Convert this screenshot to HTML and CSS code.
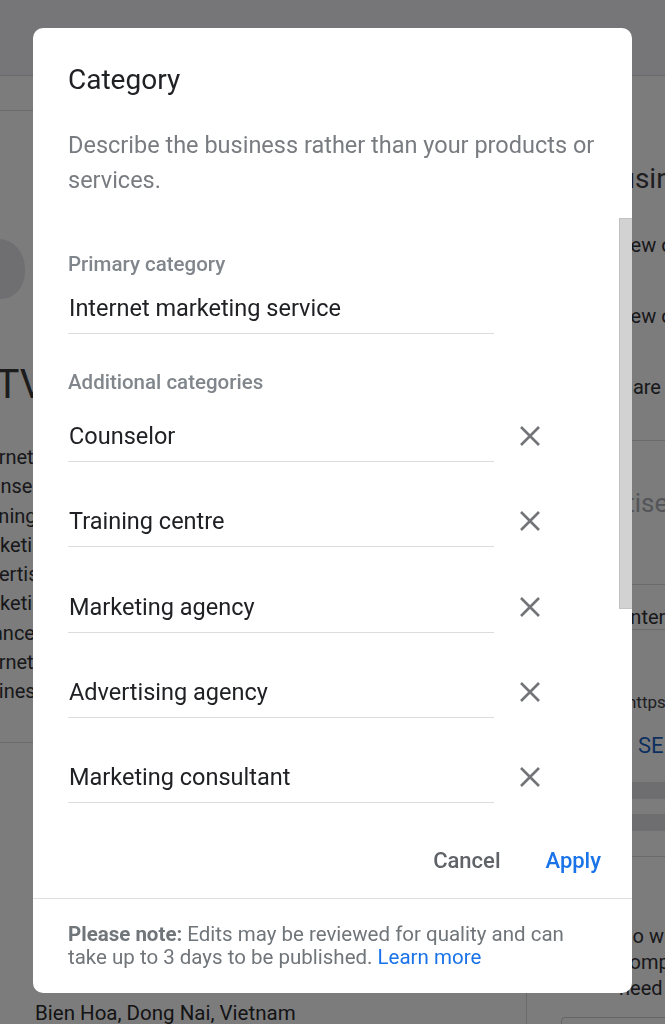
FILE: index.html
```html
<!DOCTYPE html>
<html lang="en">
<head>
    <meta charset="UTF-8">
    <meta name="viewport" content="width=device-width, initial-scale=1.0">
    <title>Category</title>
    <link rel="stylesheet" href="styles.css">
</head>
<body>
<div class="topbar"></div>
<div class="page">
    <div class="left">
        <div class="tabs"></div>
        <div class="logo"></div>
        <div class="biz-name">ATVN</div>
        <ul class="cat-list">
            <li>Internet marketing service</li>
            <li>Counselor</li>
            <li>Training centre</li>
            <li>Marketing agency</li>
            <li>Advertising agency</li>
            <li>Marketing consultant</li>
            <li>Finance broker</li>
            <li>Internet service</li>
            <li>Business centre</li>
        </ul>
        <div class="addr">
            <div class="addr-label">Service area</div>
            <div class="addr-text">Bien Hoa, Dong Nai, Vietnam</div>
        </div>
    </div>
    <div class="right">
        <div class="rc-indent">
            <div class="rc-title">Business Profile</div>
            <div class="rc-link first">View on Maps</div>
            <div class="rc-link">View on Search</div>
            <div class="rc-link">Share profile</div>
        </div>
        <div class="rc-indent rc-section">
            <div class="rc-ad">Advertise</div>
        </div>
        <div class="rc-indent rc-section">
            <div class="rc-small">Enter your website</div>
        </div>
        <div class="rc-indent">
            <div class="rc-url">https://</div>
            <div class="rc-see">SEE DETAILS</div>
        </div>
        <div class="rc-bar"></div>
        <div class="rc-bar"></div>
        <div class="rc-indent rc-tips">
            Go where customers are looking, computers and phones, when you need them
        </div>
        <div class="rc-button"></div>
    </div>
</div>

<div class="backdrop"></div>

<div class="dialog">
    <div class="dialog-title">Category</div>
    <div class="dialog-desc">Describe the business rather than your products or services.</div>

    <div class="scroll-wrap">
        <div class="dialog-scroll">
            <div class="scroll-inner">
                <div class="field-label">Primary category</div>
                <div class="field primary">Internet marketing service</div>

                <div class="field-label extra">Additional categories</div>
                <div class="row first">
                    <div class="field">Counselor</div>
                    <button class="remove" type="button"><svg width="22" height="22" viewBox="0 0 22 22"><path d="M2 2L20 20M20 2L2 20" stroke="#727478" stroke-width="2.6" fill="none"/></svg></button>
                </div>
                <div class="row">
                    <div class="field">Training centre</div>
                    <button class="remove" type="button"><svg width="22" height="22" viewBox="0 0 22 22"><path d="M2 2L20 20M20 2L2 20" stroke="#727478" stroke-width="2.6" fill="none"/></svg></button>
                </div>
                <div class="row">
                    <div class="field">Marketing agency</div>
                    <button class="remove" type="button"><svg width="22" height="22" viewBox="0 0 22 22"><path d="M2 2L20 20M20 2L2 20" stroke="#727478" stroke-width="2.6" fill="none"/></svg></button>
                </div>
                <div class="row">
                    <div class="field">Advertising agency</div>
                    <button class="remove" type="button"><svg width="22" height="22" viewBox="0 0 22 22"><path d="M2 2L20 20M20 2L2 20" stroke="#727478" stroke-width="2.6" fill="none"/></svg></button>
                </div>
                <div class="row">
                    <div class="field">Marketing consultant</div>
                    <button class="remove" type="button"><svg width="22" height="22" viewBox="0 0 22 22"><path d="M2 2L20 20M20 2L2 20" stroke="#727478" stroke-width="2.6" fill="none"/></svg></button>
                </div>
                <div class="row">
                    <div class="field empty">Add another category</div>
                </div>
            </div>
        </div>
        <div class="scroll-thumb"></div>
    </div>

    <div class="dialog-actions">
        <button class="btn cancel" type="button">Cancel</button>
        <button class="btn apply" type="button">Apply</button>
    </div>

    <div class="dialog-note">
        <b>Please note:</b> Edits may be reviewed for quality and can take up to 3 days to be published. <a href="#">Learn more</a>
    </div>
</div>
</body>
</html>
```

FILE: styles.css
```css
body {
    margin: 0;
    font-family: Roboto, "Liberation Sans", sans-serif;
    background-color: #f8f8fa;
    color: #202124;
    width: 665px;
    height: 1024px;
    overflow: hidden;
}

/* page behind the dialog */
.topbar {
    height: 75px;
    background-color: #ececf0;
    border-bottom: 1px solid #d4d4d8;
}
.page {
    display: flex;
    height: 948px;
    overflow: hidden;
}
.left {
    width: 561px;
    margin-left: -35px;
    border-right: 1px solid #d4d4d8;
    flex-shrink: 0;
}
.tabs {
    height: 34px;
    border-bottom: 1px solid #d4d4d8;
}
.logo {
    width: 52px;
    height: 60px;
    margin: 128px 0 0 8px;
    border-radius: 45% 50% 45% 50%;
    background-color: #dedee2;
}
.biz-name {
    margin: 66px 0 0 7px;
    font-size: 40px;
    line-height: 40px;
    color: #38383a;
}
.cat-list {
    list-style: none;
    margin: 38px 0 0;
    padding: 0 0 36px;
    font-size: 20px;
    line-height: 29.25px;
    color: #303034;
    border-bottom: 1px solid #d4d4d8;
}
.addr {
    padding: 229px 0 0 70px;
}
.addr-label {
    margin-bottom: 6px;
    font-size: 18px;
    line-height: 22px;
    font-weight: 500;
}
.addr-text {
    font-size: 20.5px;
    line-height: 26px;
    color: #28282a;
}
.right {
    flex: 1;
    padding-left: 34px;
    white-space: nowrap;
}
.rc-indent {
    padding-left: 58px;
}
.rc-section {
    border-top: 1px solid #d4d4d8;
}
.rc-title {
    margin: 86px 0 0 -17px;
    font-size: 28px;
    line-height: 34px;
    color: #3c3c40;
}
.rc-link {
    margin: 47px 0 0 -6px;
    font-size: 20px;
    line-height: 24px;
    color: #303034;
}
.rc-link.first {
    margin-top: 37px;
}
.rc-link:last-child {
    margin-bottom: 41px;
    margin-left: -9px;
}
.rc-ad {
    margin: 47px 0 66px -60px;
    font-size: 26px;
    line-height: 30px;
    color: #a8abb0;
}
.rc-small {
    margin: 20px 0 16px;
    font-size: 20px;
    line-height: 24px;
    color: #303034;
    border-bottom: 1px solid #d4d4d8;
}
.rc-url {
    margin-top: 61px;
    padding-left: 8px;
    font-size: 17px;
    line-height: 22px;
    color: #404044;
}
.rc-see {
    margin-top: 20px;
    padding-left: 19px;
    font-size: 22px;
    line-height: 26px;
    color: #1a5fc0;
}
.rc-bar {
    height: 17px;
    margin-top: 23px;
    background-color: #dcdce0;
}
.rc-bar + .rc-bar {
    margin-top: 15px;
    border-bottom: 25px solid #f8f8fa;
}
.rc-tips {
    border-top: 1px solid #d4d4d8;
    padding-top: 66px;
    white-space: normal;
    width: 300px;
    font-size: 20px;
    line-height: 26px;
    color: #303034;
}
.rc-button {
    margin-top: 16px;
    height: 40px;
    border: 1px solid #c8c8cc;
    border-radius: 4px;
}

.backdrop {
    position: fixed;
    top: 0;
    left: 0;
    right: 0;
    bottom: 0;
    background-color: rgba(0, 0, 0, 0.5);
}

/* dialog */
.dialog {
    position: fixed;
    top: 28px;
    left: 33px;
    width: 599px;
    background-color: #fff;
    border-radius: 10px;
    overflow: hidden;
}
.dialog-title {
    padding: 36px 35px 0;
    font-size: 28px;
    line-height: 32px;
    color: #202124;
}
.dialog-desc {
    padding: 31.5px 20px 20.5px 35px;
    font-size: 23.5px;
    line-height: 35px;
    color: #787c81;
}
.scroll-wrap {
    position: relative;
}
.dialog-scroll {
    height: 612px;
    overflow-y: auto;
    scrollbar-width: none;
}
.scroll-thumb {
    position: absolute;
    top: 0;
    right: 0;
    width: 12px;
    height: 389px;
    background-color: #d2d2d2;
    border: 1px solid #c2c2c2;
    border-right: none;
}
.scroll-inner {
    padding: 34px 0 292px 35px;
}
.field-label {
    font-size: 20.5px;
    line-height: 24px;
    font-weight: 500;
    color: #80868b;
}
.field-label.extra {
    margin-top: 36px;
}
.field {
    box-sizing: border-box;
    width: 426px;
    padding: 0 0 10px 1px;
    font-size: 23.5px;
    line-height: 30px;
    color: #202124;
    border-bottom: 1px solid #dadce0;
}
.field.primary {
    margin-top: 17px;
}
.field.empty {
    color: #fff;
}
.row {
    display: flex;
    align-items: flex-start;
    margin-top: 44.3px;
}
.row.first {
    margin-top: 27px;
}
.remove {
    margin: 4px 0 0 25px;
    padding: 0;
    border: none;
    background: none;
    width: 22px;
    height: 22px;
    cursor: pointer;
}
.remove svg {
    display: block;
}
.dialog-actions {
    display: flex;
    justify-content: flex-end;
    gap: 21px;
    padding: 12px 19px 20px;
}
.btn {
    height: 36px;
    padding: 0 12px;
    border: none;
    background: none;
    font-family: Roboto, "Liberation Sans", sans-serif;
    font-size: 22px;
    font-weight: 500;
    cursor: pointer;
}
.cancel {
    color: #5f6368;
}
.apply {
    color: #1a73e8;
}
.dialog-note {
    border-top: 1px solid #e0e0e0;
    padding: 24px 55px 24px 35px;
    font-size: 20.5px;
    line-height: 23px;
    color: #70757a;
}
.dialog-note b {
    font-weight: 700;
}
.dialog-note a {
    color: #1a73e8;
    text-decoration: none;
}
```
